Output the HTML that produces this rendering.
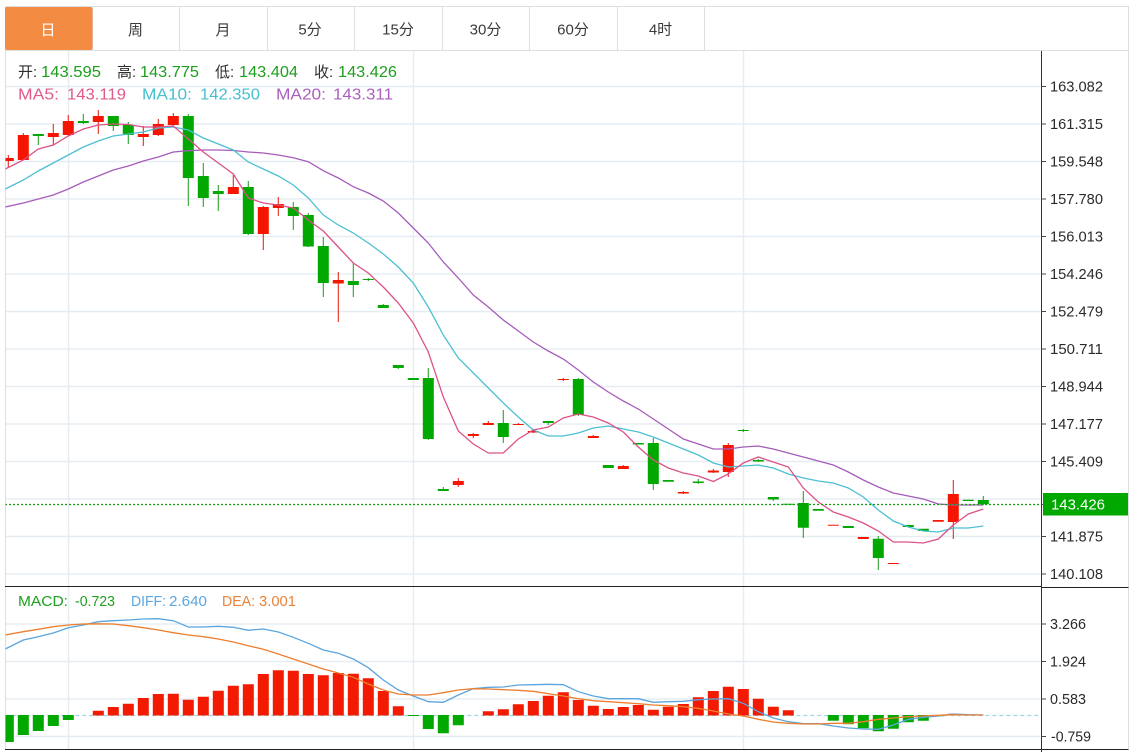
<!DOCTYPE html>
<html lang="zh">
<head>
<meta charset="utf-8">
<title>K线图</title>
<style>
html,body{margin:0;padding:0;background:#fff;width:1139px;height:752px;overflow:hidden}
svg{display:block;filter:blur(.3px)}
text{font-family:"Liberation Sans","Noto Sans CJK SC",sans-serif}
</style>
</head>
<body>
<svg width="1139" height="752" viewBox="0 0 1139 752" xmlns="http://www.w3.org/2000/svg">
<defs><clipPath id="c"><rect x="5.5" y="50" width="1035.5" height="700"/></clipPath></defs>
<rect width="1139" height="752" fill="#fff"/>

<!-- grid -->
<g fill="none" stroke="#e6edf2" stroke-width="1.400">
<path d="M5 86.500H1041M5 124H1041M5 161.500H1041M5 199H1041M5 236.500H1041M5 274H1041M5 311.500H1041M5 349H1041M5 386.500H1041M5 424H1041M5 461.500H1041M5 499H1041M5 536.500H1041M5 574H1041"/>
<path d="M5 624H1041M5 661.500H1041M5 699H1041M5 736.500H1041"/>
<path d="M68.500 50V749M413.500 50V749M743.500 50V749"/>
</g>

<!-- frame -->
<g fill="none" stroke="#dedede" stroke-width="1">
<path d="M5.500 6.500H1128.500V749M5.500 6.500V749M5 50.500H1129"/>
<path d="M92.500 6V50M179.500 6V50M267.500 6V50M354.500 6V50M442.500 6V50M529.500 6V50M617.500 6V50M704.500 6V50"/>
</g>

<!-- tabs -->
<rect x="5" y="7" width="87.500" height="43" rx="2" fill="#f38b42"/>
<g font-size="15" text-anchor="middle" fill="#3a3a3a">
<text x="48" y="35" fill="#fff">日</text>
<text x="135.500" y="35">周</text>
<text x="223" y="35">月</text>
<text x="310" y="34.500">5分</text>
<text x="398" y="34.500">15分</text>
<text x="485.500" y="34.500">30分</text>
<text x="573" y="34.500">60分</text>
<text x="660.500" y="34.500">4时</text>
</g>

<g clip-path="url(#c)">
<g transform="translate(.3 0)">
<!-- red wicks -->
<path fill="none" stroke="#e52b22" stroke-width="1.100" d="M8 155V168M23 133V160M53 124V145M68 115V136M98 110V134M143 126V146M158 119V136M173 113V126M233 175V194M263 206V250M278 197V216M338 272V322M458 478V487M473 433V438M488 421V425M518 423V425M533 429V433M563 378V381M593 435V438M623 465V469M683 491V494M713 469V473M728 443V477M953 480V539"/>
<!-- green wicks -->
<path fill="none" stroke="#2aa52a" stroke-width="1.100" d="M38 134V145M83 114V124M113 116V131M128 122V144M188 114V206M203 163V207M218 185V211M248 181V235M293 202V230M308 213V247M323 237V297M353 263V297M368 278V281M383 304V308M398 365V369M428 368V440M443 487V491M503 410V443M548 421V425M578 378V416M653 438V490M698 479V484M743 429V432M758 459V462M773 497V501M803 491V538M878 536V570M983 496V505"/>
<!-- red bodies -->
<path fill="#f51500" d="M2.500 158h11V161h-11zM17.500 135h11V160h-11zM47.500 133h11V137h-11zM62.500 121h11V135h-11zM92.500 116h11V122h-11zM137.500 134h11V137h-11zM152.500 124h11V135h-11zM167.500 116h11V125h-11zM227.500 187h11V194h-11zM257.500 207h11V234h-11zM272.500 204h11V208h-11zM332.500 280h11V283.500h-11zM452.500 481h11V485h-11zM467.500 434h11V436h-11zM482.500 423h11V425h-11zM512.500 424h11V425h-11zM527.500 431h11V432.500h-11zM557.500 379h11V380h-11zM587.500 436h11V438h-11zM617.500 466h11V469h-11zM677.500 492h11V493.500h-11zM707.500 470.500h11V472.500h-11zM722.500 445h11V472h-11zM827.500 524.700h11V525.700h-11zM857.500 537h11V539h-11zM887.500 563h11V564h-11zM932.500 520h11V521.700h-11zM947.500 494h11V522h-11z"/>
<!-- green bodies -->
<path fill="#00a800" d="M32.500 134h11V136h-11zM77.500 121h11V123h-11zM107.500 116h11V126h-11zM122.500 125h11V135h-11zM182.500 116h11V178h-11zM197.500 176h11V198h-11zM212.500 191h11V194h-11zM242.500 187h11V234h-11zM287.500 207h11V216h-11zM302.500 215h11V246.500h-11zM317.500 246h11V283h-11zM347.500 281h11V285h-11zM362.500 279h11V280h-11zM377.500 305h11V308h-11zM392.500 365h11V368h-11zM407.500 378h11V380h-11zM422.500 378h11V439h-11zM437.500 489h11V491h-11zM497.500 423h11V437h-11zM542.500 421h11V423h-11zM572.500 379h11V415h-11zM602.500 465h11V468h-11zM632.500 443h11V444.500h-11zM647.500 443h11V484h-11zM662.500 480h11V481.700h-11zM692.500 481.500h11V483h-11zM737.500 430h11V431h-11zM752.500 460h11V461.500h-11zM767.500 497h11V499.500h-11zM782.500 503.700h11V504.700h-11zM797.500 503h11V527.700h-11zM812.500 509h11V510.700h-11zM842.500 526h11V528h-11zM872.500 538.700h11V558h-11zM902.500 525h11V527h-11zM917.500 528.700h11V531h-11zM962.500 499.700h11V501h-11zM977.500 500h11V504.300h-11z"/>

<!-- MA20 -->
<polyline fill="none" stroke="#a65cba" stroke-width="1.300" points="5,207 23,203 38,199 53,195 68,189 83,182 98,176 113,170 128,166 143,161 158,157 173,152 188,150.700 203,150 218,150 233,150.500 248,152 263,153 278,155 293,157.700 308,161.700 323,170.700 338,178 353,186.700 368,193 383,201 398,213 413,228 428,243 443,262 458,278 473,295 488,307 503,320 518,331 533,342 548,351 563,359 578,370 593,382 608,392 623,401 638,409 653,419 668,429 683,439 698,444 713,449 728,449 743,447 758,446 773,449 788,453 803,457 818,461 833,465 848,472 863,480 878,487 893,493 908,496 923,499 938,504 953,505 968,505 983,505"/>
<!-- MA10 -->
<polyline fill="none" stroke="#4cc0d2" stroke-width="1.300" points="5,189 23,180 38,171 53,163 68,155 83,147 98,141 113,136 128,134 143,132 158,128 173,127 188,130 203,138 218,144 233,150 248,162 263,169 278,176 293,185 308,198 323,215 338,225 353,233 368,243 383,254 398,267 413,283 428,307 443,335 458,358 473,373 488,388 503,403 518,417 533,430 548,436 563,436 578,433 593,428 608,426 623,429 638,432 653,437 668,443 683,449 698,455 713,463 728,467 743,466 758,465 773,468 788,474 803,478 818,481 833,483 848,488 863,497 878,510 893,521 908,527 923,531 938,532 953,528 968,528 983,526"/>
<!-- MA5 -->
<polyline fill="none" stroke="#dc5288" stroke-width="1.300" points="5,169 23,160 38,149 53,145 68,136 83,129 98,125 113,124 128,124.500 143,127 158,127 173,126 188,139 203,152 218,163 233,174 248,198 263,203 278,205 293,208 308,220 323,231 338,247 353,263 368,273 383,287 398,303 413,323 428,352 443,397 458,431 473,444 488,453 503,453 518,439 533,430 548,427 563,418 578,414 593,417 608,423 623,432 638,447 653,460 668,468 683,473 698,476 713,481.500 728,474 743,463 758,457 773,462 788,467 803,488 818,502 833,512 848,517 863,523 878,531 893,542 908,542 923,543 938,539 953,525 968,514 983,509"/>

<!-- MACD zero dashed -->
<path fill="none" stroke="#9fd6ea" stroke-width="1.200" stroke-dasharray="4 3" d="M5 715.500H1038"/>
<!-- MACD red bars -->
<path fill="#f21a00" d="M92.500 710.700h11V715.500h-11zM107.500 707h11V715.500h-11zM122.500 703.700h11V715.500h-11zM137.500 698h11V715.500h-11zM152.500 694h11V715.500h-11zM167.500 693.700h11V715.500h-11zM182.500 699.700h11V715.500h-11zM197.500 696.700h11V715.500h-11zM212.500 690.700h11V715.500h-11zM227.500 685.700h11V715.500h-11zM242.500 684.300h11V715.500h-11zM257.500 674h11V715.500h-11zM272.500 670.300h11V715.500h-11zM287.500 670.700h11V715.500h-11zM302.500 674h11V715.500h-11zM317.500 675.300h11V715.500h-11zM332.500 673h11V715.500h-11zM347.500 673.700h11V715.500h-11zM362.500 678.300h11V715.500h-11zM377.500 691h11V715.500h-11zM392.500 706.300h11V715.500h-11zM482.500 711.300h11V715.500h-11zM497.500 709.300h11V715.500h-11zM512.500 704.300h11V715.500h-11zM527.500 701h11V715.500h-11zM542.500 695.700h11V715.500h-11zM557.500 692.300h11V715.500h-11zM572.500 700h11V715.500h-11zM587.500 705.700h11V715.500h-11zM602.500 709h11V715.500h-11zM617.500 707h11V715.500h-11zM632.500 705h11V715.500h-11zM647.500 709.700h11V715.500h-11zM662.500 706.700h11V715.500h-11zM677.500 704h11V715.500h-11zM692.500 697.300h11V715.500h-11zM707.500 691h11V715.500h-11zM722.500 686.700h11V715.500h-11zM737.500 689h11V715.500h-11zM752.500 698.700h11V715.500h-11zM767.500 706.700h11V715.500h-11zM782.500 710.300h11V715.500h-11zM947.500 713.700h11V715.500h-11z"/>
<!-- MACD green bars -->
<path fill="#00a800" d="M2.500 715h11V742h-11zM17.500 715h11V735h-11zM32.500 715h11V731h-11zM47.500 715h11V726h-11zM62.500 715h11V720h-11zM407.500 715h11V716h-11zM422.500 715h11V729h-11zM437.500 715h11V733.300h-11zM452.500 715h11V725.300h-11zM827.500 715h11V720.700h-11zM842.500 715h11V724.300h-11zM857.500 715h11V728.300h-11zM872.500 715h11V731.300h-11zM887.500 715h11V728.700h-11zM902.500 715h11V722.300h-11zM917.500 715h11V720.700h-11zM932.500 715h11V716.300h-11z"/>
<!-- DIFF -->
<polyline fill="none" stroke="#5ba5de" stroke-width="1.300" points="5,649 23,640 38,636.700 53,633 68,627.700 83,625 98,621.700 113,620.700 128,620 143,619 158,618.700 173,620.700 188,627 203,627 218,626.300 233,627.300 248,630.300 263,629 278,632 293,637.300 308,643.300 323,650 338,653.300 353,659 368,667.700 383,680 398,690 413,696 428,701.700 443,702.300 458,695 473,688.700 488,687.300 503,687 518,685 533,684.700 548,684.300 563,684.700 578,691.700 593,696 608,698.700 623,698.700 638,698.700 653,702.300 668,701.700 683,701.300 698,699.700 713,699 728,698.700 743,703.300 758,711.700 773,718 788,721.700 803,723.700 818,723.700 833,726 848,728 863,729 878,729.300 893,725 908,719.300 923,717.300 938,716 953,714 968,714.700 983,715"/>
<!-- DEA -->
<polyline fill="none" stroke="#ec7f30" stroke-width="1.300" points="5,635 23,631.700 38,629.300 53,626.700 68,625 83,624 98,623.800 113,624 128,625.700 143,627.700 158,630 173,632.700 188,635 203,636.700 218,639 233,642 248,645.700 263,649.300 278,654 293,659 308,664 323,669 338,673 353,677.300 368,684 383,690 398,694 413,695 428,695 443,692.700 458,690 473,688.700 488,689 503,689.700 518,690.300 533,691.300 548,693.700 563,696 578,698.700 593,700.700 608,701.700 623,702.700 638,703.700 653,705 668,705.700 683,706.700 698,708.300 713,711 728,714 743,716 758,719.300 773,722 788,723.300 803,724 818,724 833,723.300 848,723.300 863,721.700 878,719.300 893,718 908,716.700 923,716 938,715.300 953,714.700 968,715 983,715"/>
</g>
<!-- last price dotted line -->
<path fill="none" stroke="#0f9f0f" stroke-width="1.200" stroke-dasharray="2 2" d="M5 504.500H1041"/>
</g>

<!-- separators & axis -->
<g fill="none" stroke="#222" stroke-width="1">
<path d="M5 586.500H1041M1041 587.500H1128.500M5 749.500H1128.500"/>
<path d="M1041.500 51V752" stroke="#333"/>
<path stroke="#444" d="M1041 86.500h5M1041 124h5M1041 161.500h5M1041 199h5M1041 236.500h5M1041 274h5M1041 311.500h5M1041 349h5M1041 386.500h5M1041 424h5M1041 461.500h5M1041 504.500h5M1041 536.500h5M1041 574h5M1041 624h5M1041 661.500h5M1041 699h5M1041 736.500h5"/>
</g>

<!-- axis labels -->
<g font-size="14.500" fill="#2a2a2a">
<text x="1050" y="91.500" textLength="53" lengthAdjust="spacingAndGlyphs">163.082</text>
<text x="1050" y="129" textLength="53" lengthAdjust="spacingAndGlyphs">161.315</text>
<text x="1050" y="166.500" textLength="53" lengthAdjust="spacingAndGlyphs">159.548</text>
<text x="1050" y="204" textLength="53" lengthAdjust="spacingAndGlyphs">157.780</text>
<text x="1050" y="241.500" textLength="53" lengthAdjust="spacingAndGlyphs">156.013</text>
<text x="1050" y="279" textLength="53" lengthAdjust="spacingAndGlyphs">154.246</text>
<text x="1050" y="316.500" textLength="53" lengthAdjust="spacingAndGlyphs">152.479</text>
<text x="1050" y="354" textLength="53" lengthAdjust="spacingAndGlyphs">150.711</text>
<text x="1050" y="391.500" textLength="53" lengthAdjust="spacingAndGlyphs">148.944</text>
<text x="1050" y="429" textLength="53" lengthAdjust="spacingAndGlyphs">147.177</text>
<text x="1050" y="466.500" textLength="53" lengthAdjust="spacingAndGlyphs">145.409</text>
<text x="1050" y="541.500" textLength="53" lengthAdjust="spacingAndGlyphs">141.875</text>
<text x="1050" y="579" textLength="53" lengthAdjust="spacingAndGlyphs">140.108</text>
<text x="1050" y="629" textLength="36" lengthAdjust="spacingAndGlyphs">3.266</text>
<text x="1050" y="666.500" textLength="36" lengthAdjust="spacingAndGlyphs">1.924</text>
<text x="1050" y="704" textLength="36" lengthAdjust="spacingAndGlyphs">0.583</text>
<text x="1051" y="741.500" textLength="40" lengthAdjust="spacingAndGlyphs">-0.759</text>
</g>
<rect x="1043" y="493" width="85" height="22.500" fill="#00a800"/>
<text x="1051" y="509.500" font-size="14.500" fill="#fff" textLength="54" lengthAdjust="spacingAndGlyphs">143.426</text>

<!-- OHLC legend -->
<g font-size="15" fill="#2e2e2e">
<text x="18" y="77">开:</text>
<text x="117" y="77">高:</text>
<text x="215" y="77">低:</text>
<text x="314" y="77">收:</text>
</g>
<g font-size="15.500" fill="#1c9f1c">
<text x="41" y="77" textLength="60" lengthAdjust="spacingAndGlyphs">143.595</text>
<text x="140" y="77" textLength="59" lengthAdjust="spacingAndGlyphs">143.775</text>
<text x="239" y="77" textLength="59" lengthAdjust="spacingAndGlyphs">143.404</text>
<text x="338" y="77" textLength="59" lengthAdjust="spacingAndGlyphs">143.426</text>
</g>
<g font-size="15.500">
<text x="18" y="99.500" fill="#e0588c" textLength="41" lengthAdjust="spacingAndGlyphs">MA5:</text>
<text x="67" y="99.500" fill="#e0588c" textLength="59" lengthAdjust="spacingAndGlyphs">143.119</text>
<text x="142" y="99.500" fill="#45bfd0" textLength="50" lengthAdjust="spacingAndGlyphs">MA10:</text>
<text x="200" y="99.500" fill="#45bfd0" textLength="60" lengthAdjust="spacingAndGlyphs">142.350</text>
<text x="276" y="99.500" fill="#aa5fbd" textLength="50" lengthAdjust="spacingAndGlyphs">MA20:</text>
<text x="333" y="99.500" fill="#aa5fbd" textLength="60" lengthAdjust="spacingAndGlyphs">143.311</text>
</g>

<!-- MACD legend -->
<g font-size="14.500">
<text x="18" y="606" fill="#1f9f1f" textLength="50" lengthAdjust="spacingAndGlyphs">MACD:</text>
<text x="75" y="606" fill="#1f9f1f" textLength="40" lengthAdjust="spacingAndGlyphs">-0.723</text>
<text x="131" y="606" fill="#5aa6e0" textLength="35" lengthAdjust="spacingAndGlyphs">DIFF:</text>
<text x="169" y="606" fill="#5aa6e0" textLength="38" lengthAdjust="spacingAndGlyphs">2.640</text>
<text x="222" y="606" fill="#e8823a" textLength="33" lengthAdjust="spacingAndGlyphs">DEA:</text>
<text x="259" y="606" fill="#e8823a" textLength="37" lengthAdjust="spacingAndGlyphs">3.001</text>
</g>
</svg>
</body>
</html>
